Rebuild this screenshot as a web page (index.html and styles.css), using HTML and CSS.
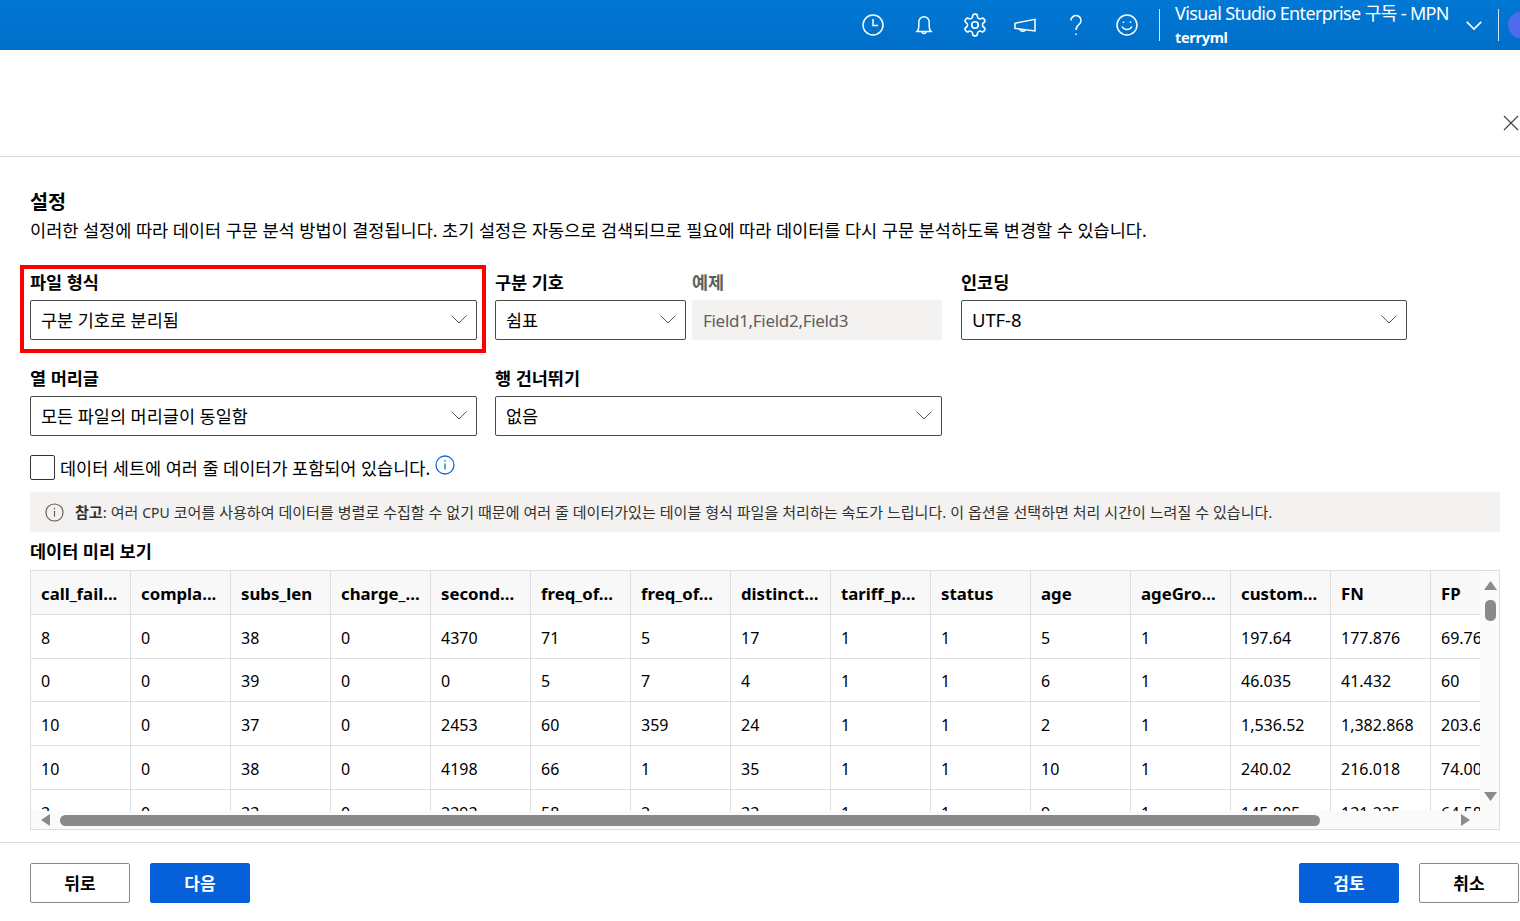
FILE: index.html
```html
<!DOCTYPE html>
<html lang="ko">
<head>
<meta charset="utf-8">
<title>설정</title>
<link rel="stylesheet" href="styles.css">
</head>
<body>
<header class="topbar">
  <div class="top-icons">
    <svg class="ti" viewBox="0 0 24 24"><circle cx="12" cy="12" r="10"/><path d="M12 6v6.500h5"/></svg>
    <svg class="ti" viewBox="0 0 24 24"><path d="M5 18.500c1.500-1.500 1.800-3 1.800-5V9a5.200 5.200 0 0 1 10.400 0v4.500c0 2 .3 3.500 1.800 5z"/><path d="M10 18.500a2 2 0 0 0 4 0"/></svg>
    <svg class="ti" viewBox="1 1 22 22"><path d="M12.220 2h-.44a2 2 0 0 0-2 2v.18a2 2 0 0 1-1 1.730l-.43.25a2 2 0 0 1-2 0l-.15-.08a2 2 0 0 0-2.730.73l-.22.380a2 2 0 0 0 .73 2.730l.15.1a2 2 0 0 1 1 1.720v.51a2 2 0 0 1-1 1.740l-.15.09a2 2 0 0 0-.73 2.730l.22.380a2 2 0 0 0 2.730.73l.15-.08a2 2 0 0 1 2 0l.43.25a2 2 0 0 1 1 1.730V20a2 2 0 0 0 2 2h.44a2 2 0 0 0 2-2v-.18a2 2 0 0 1 1-1.730l.43-.25a2 2 0 0 1 2 0l.15.08a2 2 0 0 0 2.730-.73l.22-.39a2 2 0 0 0-.73-2.730l-.15-.08a2 2 0 0 1-1-1.740v-.5a2 2 0 0 1 1-1.740l.15-.09a2 2 0 0 0 .73-2.730l-.22-.38a2 2 0 0 0-2.730-.73l-.15.08a2 2 0 0 1-2 0l-.43-.25a2 2 0 0 1-1-1.730V4a2 2 0 0 0-2-2z"/><circle cx="12" cy="12" r="3"/></svg>
    <svg class="ti" viewBox="0 0 24 24"><path d="M2 10.300v5L22 18V6.300z"/><path d="M7 16c0 2.500 4.500 3 5.500.6"/></svg>
    <svg class="ti" viewBox="0 0 24 24"><path d="M7 7.500a5 5 0 1 1 8 4c-2 1.500-3 2.800-3 5.500"/><path d="M12 20.500v1.500"/></svg>
    <svg class="ti" viewBox="0 0 24 24"><circle cx="12" cy="12" r="10"/><path d="M7 13.500c2 4 8 4 10 0"/><path d="M8.500 8.500v1.500M15.500 8.500v1.500"/></svg>
  </div>
  <div class="top-divider"></div>
  <div class="account">
    <div class="sub-name">Visual Studio Enterprise 구독 - MPN</div>
    <div class="user-name">terryml</div>
  </div>
  <svg class="top-chevron" viewBox="0 0 20 12"><path d="M2 2l8 8 8-8"/></svg>
  <div class="top-divider end"></div>
  <div class="avatar"></div>
</header>

<div class="panel-head">
  <svg class="close" viewBox="0 0 16 16"><path d="M1 1l14 14M15 1L1 15"/></svg>
</div>

<main class="content">
  <h2 class="title">설정</h2>
  <p class="desc">이러한 설정에 따라 데이터 구문 분석 방법이 결정됩니다. 초기 설정은 자동으로 검색되므로 필요에 따라 데이터를 다시 구문 분석하도록 변경할 수 있습니다.</p>

  <div class="form-grid">
    <div class="field marked">
      <label class="label">파일 형식</label>
      <div class="select"><span>구분 기호로 분리됨</span><svg class="chev" viewBox="0 0 16 9"><path d="M.5.500 8 8 15.500.500"/></svg></div>
    </div>
    <div class="pair">
      <div class="field">
        <label class="label">구분 기호</label>
        <div class="select"><span>쉼표</span><svg class="chev" viewBox="0 0 16 9"><path d="M.5.500 8 8 15.500.500"/></svg></div>
      </div>
      <div class="field">
        <label class="label muted">예제</label>
        <div class="readonly">Field1,Field2,Field3</div>
      </div>
    </div>
    <div class="field nudge">
      <label class="label">인코딩</label>
      <div class="select"><span class="latin-value">UTF-8</span><svg class="chev" viewBox="0 0 16 9"><path d="M.5.500 8 8 15.500.500"/></svg></div>
    </div>
    <div class="field">
      <label class="label">열 머리글</label>
      <div class="select"><span>모든 파일의 머리글이 동일함</span><svg class="chev" viewBox="0 0 16 9"><path d="M.5.500 8 8 15.500.500"/></svg></div>
    </div>
    <div class="field">
      <label class="label">행 건너뛰기</label>
      <div class="select"><span>없음</span><svg class="chev" viewBox="0 0 16 9"><path d="M.5.500 8 8 15.500.500"/></svg></div>
    </div>
  </div>

  <div class="check-row">
    <span class="checkbox"></span>
    <span class="check-text">데이터 세트에 여러 줄 데이터가 포함되어 있습니다.</span>
    <svg class="info-blue" viewBox="0 0 20 20"><circle cx="10" cy="10" r="9"/><path d="M10 8.500v6M10 5v1.500"/></svg>
  </div>

  <div class="note">
    <svg class="info-gray" viewBox="0 0 20 20"><circle cx="10" cy="10" r="9"/><path d="M10 8.500v6M10 5v1.500"/></svg>
    <span class="note-text"><b>참고</b>: 여러 <span class="note-latin">CPU</span> 코어를 사용하여 데이터를 병렬로 수집할 수 없기 때문에 여러 줄 데이터가있는 테이블 형식 파일을 처리하는 속도가 느립니다. 이 옵션을 선택하면 처리 시간이 느려질 수 있습니다.</span>
  </div>

  <h3 class="preview-title">데이터 미리 보기</h3>

  <div class="preview">
    <div class="viewport">
      <table class="data">
        <thead>
          <tr><th>call_fail...</th><th>compla...</th><th>subs_len</th><th>charge_...</th><th>second...</th><th>freq_of...</th><th>freq_of...</th><th>distinct...</th><th>tariff_p...</th><th>status</th><th>age</th><th>ageGro...</th><th>custom...</th><th>FN</th><th>FP</th></tr>
        </thead>
        <tbody>
          <tr><td>8</td><td>0</td><td>38</td><td>0</td><td>4370</td><td>71</td><td>5</td><td>17</td><td>1</td><td>1</td><td>5</td><td>1</td><td>197.64</td><td>177.876</td><td>69.764</td></tr>
          <tr><td>0</td><td>0</td><td>39</td><td>0</td><td>0</td><td>5</td><td>7</td><td>4</td><td>1</td><td>1</td><td>6</td><td>1</td><td>46.035</td><td>41.432</td><td>60</td></tr>
          <tr><td>10</td><td>0</td><td>37</td><td>0</td><td>2453</td><td>60</td><td>359</td><td>24</td><td>1</td><td>1</td><td>2</td><td>1</td><td>1,536.52</td><td>1,382.868</td><td>203.652</td></tr>
          <tr><td>10</td><td>0</td><td>38</td><td>0</td><td>4198</td><td>66</td><td>1</td><td>35</td><td>1</td><td>1</td><td>10</td><td>1</td><td>240.02</td><td>216.018</td><td>74.002</td></tr>
          <tr><td>3</td><td>0</td><td>33</td><td>0</td><td>2393</td><td>58</td><td>2</td><td>33</td><td>1</td><td>1</td><td>9</td><td>1</td><td>145.805</td><td>131.225</td><td>64.580</td></tr>
        </tbody>
      </table>
    </div>
    <div class="vbar">
      <svg class="arrow-v" viewBox="0 0 13 9"><path d="M6.500 0 13 9H0z"/></svg>
      <div class="vthumb"></div>
      <svg class="arrow-v down" viewBox="0 0 13 9"><path d="M0 0h13L6.500 9z"/></svg>
    </div>
    <div class="hbar">
      <svg class="arrow-h" viewBox="0 0 9 12"><path d="M9 0v12L0 6z"/></svg>
      <div class="hthumb"></div>
      <svg class="arrow-h right" viewBox="0 0 9 12"><path d="M0 0l9 6-9 6z"/></svg>
    </div>
  </div>
</main>

<footer class="footer">
  <div class="btn-group">
    <button class="btn">뒤로</button>
    <button class="btn primary">다음</button>
  </div>
  <div class="btn-group">
    <button class="btn primary">검토</button>
    <button class="btn">취소</button>
  </div>
</footer>
</body>
</html>
```
FILE: styles.css
```css
* { box-sizing: border-box; }
html, body { margin: 0; padding: 0; }
body {
  width: 1520px;
  height: 921px;
  overflow: hidden;
  background: #fff;
  color: #000;
  font-family: "Noto Sans", "Noto Sans CJK KR", sans-serif;
  font-size: 16px;
  display: flex;
  flex-direction: column;
}

/* top bar */
.topbar {
  height: 50px;
  flex: none;
  display: flex;
  align-items: center;
  padding-left: 861px;
  background: linear-gradient(#0078d4, #006fc9);
  color: #fff;
  white-space: nowrap;
  overflow: hidden;
}
.top-icons { display: flex; gap: 26.800px; width: 288px; flex: none; }
.ti { width: 24px; height: 24px; flex: none; fill: none; stroke: #fff; stroke-width: 1.500; }
.top-divider { width: 1px; height: 32px; background: #cfe4f6; flex: none; margin-left: 10px; }
.top-divider.end { margin-left: 15px; }
.account { margin-left: 15px; width: 275px; flex: none; }
.sub-name { font-size: 18px; line-height: 26px; letter-spacing: -.62px; margin-top: -3px; }
.user-name { font-size: 14.500px; line-height: 20px; font-weight: 700; letter-spacing: -.3px; margin-top: 1px; }
.top-chevron { width: 18px; height: 11px; margin-left: 15px; flex: none; fill: none; stroke: #fff; stroke-width: 1.800; }
.avatar { width: 26px; height: 26px; border-radius: 50%; background: #4f6bed; margin-left: 9px; flex: none; }

/* panel header */
.panel-head {
  height: 107px;
  flex: none;
  border-bottom: 1px solid #d9d9d9;
  display: flex;
  justify-content: flex-end;
  align-items: flex-start;
  padding-top: 65px;
}
.close { width: 16px; height: 16px; fill: none; stroke: #444; stroke-width: 1.200; margin-right: 1px; }

/* content */
.content { flex: 1; padding: 32px 20px 0 30px; min-height: 0; }
.title { margin: 0; font-size: 19.600px; line-height: 26px; font-weight: 700; }
.desc { margin: 2px 0 0; font-size: 17.550px; line-height: 26px; white-space: nowrap; }

.form-grid {
  display: grid;
  grid-template-columns: 447px 447px 447px;
  column-gap: 18px;
  row-gap: 26px;
  margin-top: 27px;
}
.field { position: relative; display: flex; flex-direction: column; min-width: 0; }
.nudge { margin-left: 1px; width: 446px; }
.marked::after {
  content: "";
  position: absolute;
  left: -10px;
  right: -9px;
  top: -5px;
  bottom: -13px;
  border: 4px solid #ff0000;
  pointer-events: none;
}
.pair { display: grid; grid-template-columns: 191px 250px; column-gap: 6px; }
.label { height: 30px; font-size: 17.500px; line-height: 24px; font-weight: 700; }
.muted { color: #605e5c; }
.select {
  height: 40px;
  border: 1px solid #4a4a4a;
  border-radius: 2px;
  display: flex;
  align-items: center;
  justify-content: space-between;
  padding: 0 9px 0 10px;
  font-size: 17.500px;
  line-height: 24px;
}
.latin-value { font-size: 18.500px; letter-spacing: -.1px; }
.chev { width: 16px; height: 9px; fill: none; stroke: #555; stroke-width: 1; flex: none; margin-top: -2px; }
.readonly {
  height: 40px;
  background: #f3f2f1;
  border-radius: 2px;
  color: #605e5c;
  display: flex;
  align-items: center;
  padding: 0 11px;
  font-size: 17px;
  letter-spacing: -.3px;
}

.check-row { display: flex; align-items: flex-start; margin-top: 19px; height: 25px; }
.checkbox { width: 25px; height: 25px; border: 1px solid #333; border-radius: 2px; flex: none; }
.check-text { margin-left: 5px; font-size: 17.500px; line-height: 26px; }
.info-blue { width: 20px; height: 20px; margin-left: 5px; fill: none; stroke: #0f6cdc; stroke-width: 1.300; flex: none; }

.note {
  height: 40px;
  margin-top: 12px;
  background: #f3f2f1;
  display: flex;
  align-items: center;
  padding-left: 15px;
  color: #323130;
}
.info-gray { width: 19px; height: 19px; fill: none; stroke: #605e5c; stroke-width: 1.200; flex: none; }
.note-text { margin-left: 11px; font-size: 15.060px; line-height: 38px; white-space: nowrap; }
.note-latin { font-size: 14px; }

.preview-title { margin: 7px 0 7px; font-size: 17.500px; line-height: 24px; font-weight: 700; }

.preview {
  height: 260px;
  border: 1px solid #dedede;
  display: grid;
  grid-template-columns: 1449px 19px;
  grid-template-rows: 240px 18px;
  background: #fafafa;
}
.viewport { overflow: hidden; background: #fff; }
.data { border-collapse: collapse; table-layout: fixed; width: 1500px; margin-top: -1px; margin-left: -1px; }
.data th, .data td {
  width: 100px;
  border: 1px solid #dedede;
  padding: 3px 10px 0;
  height: 43.750px;
  text-align: left;
  white-space: nowrap;
  overflow: hidden;
  font-size: 16px;
}
.data th { background: #f8f8f8; font-weight: 700; font-size: 16.800px; padding-top: 2px; }

.vbar { display: flex; flex-direction: column; align-items: center; padding-top: 10px; padding-left: 2px; }
.arrow-v { width: 13px; height: 9px; fill: #8a8a8a; flex: none; }
.arrow-v.down { margin-top: auto; margin-bottom: 10px; }
.vthumb { width: 11px; height: 21px; margin-top: 10px; background: #8a8a8a; border-radius: 5px; flex: none; }

.hbar { grid-column: 1 / -1; display: flex; align-items: center; padding-left: 10px; padding-right: 29px; }
.arrow-h { width: 9px; height: 12px; fill: #8a8a8a; flex: none; }
.arrow-h.right { margin-left: auto; }
.hthumb { width: 1260px; height: 11px; margin-left: 10px; background: #8a8a8a; border-radius: 6px; flex: none; }

/* footer */
.footer {
  height: 79px;
  flex: none;
  border-top: 1px solid #d9d9d9;
  display: flex;
  justify-content: space-between;
  padding: 20px 1px 0 30px;
}
.btn-group { display: flex; gap: 20px; }
.btn {
  width: 100px;
  height: 40px;
  padding: 0 0 2px;
  border: 1px solid #8a8886;
  border-radius: 2px;
  background: #fff;
  color: #000;
  font: 700 17px "Noto Sans", "Noto Sans CJK KR", sans-serif;
}
.btn.primary { background: #0560da; border-color: #0560da; color: #fff; }
```
